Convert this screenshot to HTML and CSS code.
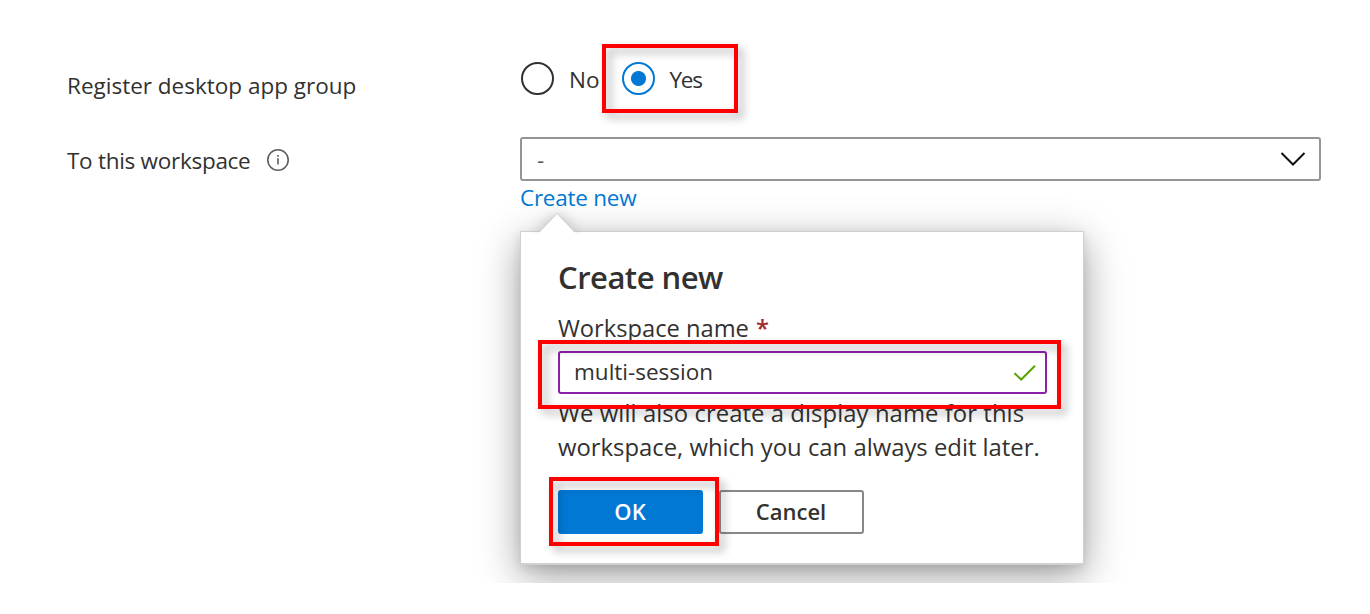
FILE: index.html
```html
<!DOCTYPE html>
<html lang="en">
<head>
<meta charset="utf-8">
<title>Workspace</title>
<link rel="stylesheet" href="styles.css">
</head>
<body>
<main class="form">
  <div class="row row-register">
    <div class="label"><span>Register desktop app group</span></div>
    <div class="radios">
      <label class="radio"><span class="circle"></span><span>No</span></label>
      <label class="radio"><span class="circle checked"></span><span class="t-yes">Yes</span><span class="mark mark-yes"></span></label>
    </div>
  </div>
  <div class="row row-workspace">
    <div class="label"><span class="t-workspace">To this workspace</span>
      <svg class="info" viewBox="0 0 24 24"><circle cx="12" cy="12" r="10.2"/><path d="M12 10.3V16.6M12 7V8.7"/></svg>
    </div>
    <div class="field">
      <div class="select"><span>-</span><svg class="chevron" viewBox="0 0 26 16"><path d="M1.5 2 13 13.5 24.5 2"/></svg></div>
      <a class="link">Create new</a>
      <section class="popup">
        <svg class="beak" viewBox="0 0 40 22"><path class="beak-fill" d="M0 22 19 2 38 22Z"/><path class="beak-line" d="M1 20 19 1.5 38 20"/></svg>
        <h2 class="title">Create new</h2>
        <div class="name-label"><span class="t-name">Workspace name</span><span class="required">*</span></div>
        <div class="input"><span class="t-value">multi-session</span><svg class="check" viewBox="0 0 24 18"><path d="M1.5 9.2 8.2 15.5 22 1.8"/></svg><span class="mark mark-input"></span></div>
        <p class="help"><span class="t-help1">We will also create a display name for this</span><span>workspace, which you can always edit later.</span></p>
        <div class="actions">
          <div class="button primary"><span>OK</span><span class="mark mark-ok"></span></div>
          <div class="button"><span class="t-cancel">Cancel</span></div>
        </div>
      </section>
    </div>
  </div>
</main>
</body>
</html>
```
FILE: styles.css
```css
* { box-sizing: border-box; }
body {
  margin: 0;
  background: #fff;
  color: #323130;
  font-family: "Open Sans", "Noto Sans", sans-serif;
  font-size: 22.5px;
  white-space: nowrap;
}
svg { fill: none; flex: none; }
.form { height: 583px; padding: 44px 49px 0 67px; overflow: hidden; }
.row { display: grid; grid-template-columns: 453px 801px; }
.row-register { height: 93px; }
.label { display: flex; align-items: center; height: 46px; gap: 16px; }
.row-register .label { margin-top: 18px; }
.t-workspace { letter-spacing: -.28px; }
.info { width: 24px; height: 24px; stroke: #605e5c; stroke-width: 1.6; }
.radios { display: flex; gap: 23px; height: 70px; padding-left: 1px; align-items: center; }
.radio { display: flex; align-items: center; gap: 15px; position: relative; }
.checked + .t-yes { margin-left: -1px; }
.t-yes { letter-spacing: -1.2px; }
.circle { width: 33px; height: 33px; margin-top: -1px; border: 2px solid #323130; border-radius: 50%; }
.checked { border-color: #0078d4; background: radial-gradient(circle, #0078d4 7px, #fff 8px); }
.field { position: relative; }
.select {
  display: flex; align-items: center; justify-content: space-between;
  height: 44px; padding: 0 13px 0 15px;
  border: 2px solid #979593; border-radius: 3px; color: #605e5c;
}
.chevron { width: 26px; height: 16px; stroke: #111; stroke-width: 2; }
.link { display: block; height: 34px; line-height: 34px; color: #0078d4; letter-spacing: -.25px; }
.popup {
  position: absolute; left: 0; top: 94px; width: 564px; height: 334px;
  padding: 23px 35px 0 37px;
  background: #fff; border: 1px solid #d2d0ce; border-bottom-width: 2px;
  box-shadow: 0 11px 38px rgba(0, 0, 0, .38), 0 3px 9px rgba(0, 0, 0, .1);
}
.beak { position: absolute; left: 17px; top: -20px; width: 40px; height: 22px; filter: drop-shadow(0 0 7px rgba(0, 0, 0, .23)); clip-path: inset(-15px -20px 0 -20px); }
.beak-fill { fill: #fff; }
.beak-line { stroke: #d2d0ce; stroke-width: 1; }
.title { margin: 0; height: 45px; line-height: 44px; font-size: 31px; font-weight: 600; letter-spacing: -.5px; }
.name-label { display: flex; height: 51px; line-height: 56px; gap: 7px; font-size: 23.7px; }
.required { color: #a4262c; font-weight: 600; }
.input {
  position: relative; display: flex; align-items: center; justify-content: space-between;
  width: 489px; height: 43px; padding: 0 8px 2px 14px;
  border: 2px solid #8a1fa8; border-radius: 3px;
}
.check { width: 24px; height: 18px; stroke: #57a300; stroke-width: 2; margin-top: 3px; }
.help { margin: 2px 0 0; display: grid; line-height: 34px; font-size: 23.85px; }
.t-help1 { letter-spacing: .07px; }
.actions { display: flex; gap: 16px; margin-top: 26px; }
.button {
  position: relative; display: flex; align-items: center; justify-content: center;
  width: 145px; height: 44px; padding: 0 1px 2px 0;
  border: 2px solid #8a8886; border-radius: 3px; font-size: 22px; font-weight: 600;
}
.primary { z-index: 1; background: #0078d4; border-color: #0078d4; color: #fff; }
/* highlight frames */
.mark { position: absolute; z-index: 2; border: 4px solid #f00; filter: drop-shadow(5px 5px 4px rgba(0, 0, 0, .3)); }
.mark-yes { left: -20px; top: -19px; width: 136px; height: 69px; }
.mark-input { left: -22px; top: -13px; width: 523px; height: 69px; }
.mark-ok { left: -11px; top: -15px; width: 170px; height: 69px; }
```
